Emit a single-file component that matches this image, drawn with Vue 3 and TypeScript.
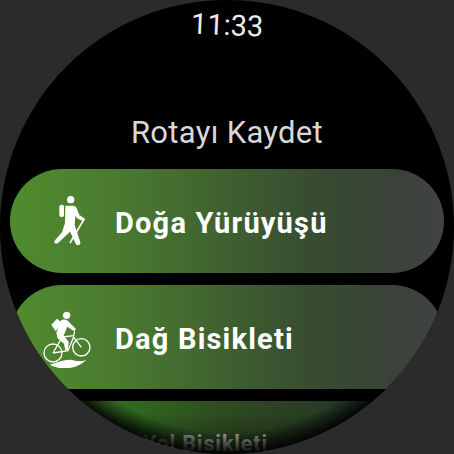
<script setup lang="ts">
interface Activity { name: string; kind: 'hike' | 'mtb' | 'road' }
const activities: Activity[] = [
  { name: 'Doğa Yürüyüşü', kind: 'hike' },
  { name: 'Dağ Bisikleti', kind: 'mtb' },
  { name: 'Yol Bisikleti', kind: 'road' },
]
</script>

<template>
  <div class="page">
    <div class="watch">
      <div class="clock">11:33</div>
      <h1 class="title">Rotayı Kaydet</h1>
      <div class="list">
        <button v-for="a in activities" :key="a.name" class="chip" :class="a.kind">
          <span v-if="a.kind !== 'road'" class="icon">
            <svg v-if="a.kind === 'hike'" viewBox="150 103 120 160" width="40" height="53.3" fill="#fff">
              <circle cx="212" cy="120" r="11" />
              <rect x="178" y="135" width="14" height="37" rx="6" />
              <path d="M196 138H219C225 138 228 141 230 146L238 166L253 176C257 180 254 187 248 184L231 176L226 168L224 196L241 248C243 256 232 260 228 254L210 216L196 230L174 250C168 254 160 250 164 243L170 236L186 218L195 190Z" />
              <path d="M250 182L210 250" stroke="#fff" stroke-width="5" fill="none" />
            </svg>
            <svg v-else viewBox="130 76 160 190" width="53.3" height="63.3" fill="none" stroke="#fff" stroke-width="4">
              <circle cx="201" cy="107" r="11" fill="#fff" stroke="none" />
              <path d="M155 135L172 117L188 130L168 155Z" fill="#fff" stroke="none" />
              <path d="M184 122C190 118 200 120 205 124L229 148L224 155L203 141L192 168L207 186L205 212L197 212L193 192L174 176L170 160Z" fill="#fff" stroke="none" />
              <circle cx="160" cy="220" r="27" />
              <circle cx="245" cy="203" r="26" />
              <path d="M160 220L205 213L222 172L245 203M160 220L188 172L205 213M188 172L222 168L225 155" />
              <path d="M150 255C170 250 190 240 210 240C225 240 235 250 260 240C245 255 225 265 200 265C180 267 165 262 150 255Z" fill="#fff" stroke="none" />
            </svg>
          </span>
          <span class="label">{{ a.name }}</span>
        </button>
      </div>
      <div class="fade"></div>
    </div>
  </div>
</template>

<style>
html, body { margin: 0; background: #2b2b2b; }
</style>

<style scoped>
.page {
  width: 454px;
  height: 454px;
  overflow: hidden;
  background: #2b2b2b;
  font-family: Roboto, "Noto Sans", sans-serif;
}
.watch {
  position: relative;
  width: 454px;
  height: 454px;
  border-radius: 50%;
  overflow: hidden;
  background: #000;
  display: flex;
  flex-direction: column;
  align-items: center;
}
.clock {
  flex: none;
  margin-top: 10px;
  height: 30px;
  line-height: 30px;
  font-size: 29px;
  color: #ececec;
  transform: rotate(2.5deg);
}
.title {
  flex: none;
  margin: 74px 0 0;
  height: 55px;
  line-height: 38px;
  font-size: 31px;
  font-weight: 400;
  letter-spacing: .3px;
  color: #d8d8d8;
}
.list {
  display: flex;
  flex-direction: column;
  gap: 12px;
  width: 434px;
  flex: none;
}
.chip {
  flex: none;
  height: 104px;
  border: 0;
  padding: 0;
  border-radius: 52px;
  display: flex;
  align-items: center;
  background: linear-gradient(90deg, #508c2e 0%, #4a7a2f 25%, #3f6030 50%, #374c30 70%, #3b423a 90%, #424344 100%);
  color: #fff;
  font-family: inherit;
}
.icon {
  flex: none;
  box-sizing: border-box;
  width: 105px;
  padding-left: 15px;
  display: flex;
  justify-content: center;
  align-items: center;
}
.label {
  margin-top: 3px;
  font-size: 29px;
  font-weight: 700;
  letter-spacing: 1.2px;
  white-space: nowrap;
}
.road {
  height: 82px;
  border-radius: 38px;
  background: linear-gradient(90deg, #3e7a26 15%, #2f661f 30%, #2f4a20 50%, #263a26 75%, #2a3a2c 95%);
}
.road .label {
  margin-left: 133px;
  transform: scale(.74);
  transform-origin: 0 50%;
  color: #cfcfcf;
}
.fade {
  position: absolute;
  left: 0;
  top: 389px;
  width: 454px;
  height: 65px;
  pointer-events: none;
  background:
    radial-gradient(circle 227px at 227px -162px, transparent 205px, rgba(0,0,0,.9) 227px),
    linear-gradient(180deg, transparent 35%, rgba(0,0,0,.4) 100%);
}
</style>
